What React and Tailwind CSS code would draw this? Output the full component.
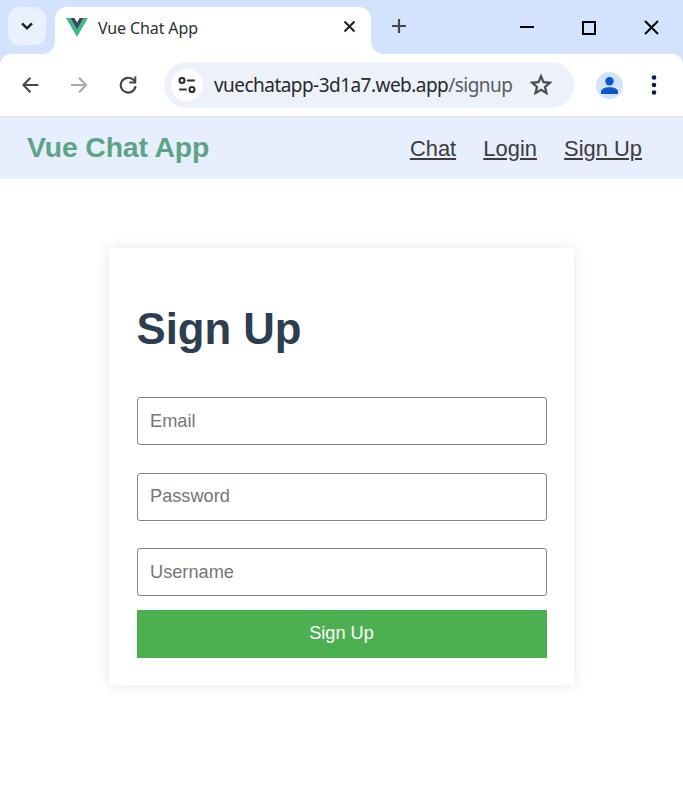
import React from 'react';

const VueLogo = () => (
    <svg width="22" height="19" viewBox="0 0 22 19" className="shrink-0">
        <path d="M0 0h4.4L11 11.4 17.6 0H22L11 19z" fill="#41b883" />
        <path d="M4.4 0h4L11 4.5 13.6 0h4L11 11.4z" fill="#35495e" />
    </svg>
);

// Small concave corner where the active tab meets the toolbar
const TabFoot = ({ flip }) => (
    <svg width="13" height="13" viewBox="0 0 13 13" className={`self-end shrink-0 ${flip ? '-scale-x-100' : ''}`}>
        <path d="M13 0v13H0C7.2 13 13 7.2 13 0z" fill="#fff" />
    </svg>
);

const TabStrip = () => (
    <div className="flex h-[54px] bg-[#d3e3fd]">
        <button className="mt-[7px] ml-2 flex h-[38px] w-[38px] shrink-0 items-center justify-center rounded-[12px] bg-[#e9f1fe]">
            <svg width="12" height="8" viewBox="0 0 12 8" fill="none" stroke="#1f1f1f" strokeWidth="2.4">
                <path d="M1 1.3l5 5 5-5" />
            </svg>
        </button>
        <div className="-ml-1 flex h-full">
            <TabFoot />
            <div className="mt-[7px] flex h-[47px] w-[316px] items-start rounded-t-[12px] bg-white pt-[11px] pr-[15px] pl-[11px]">
                <VueLogo />
                <span className="ml-[10px] flex-1 font-['Noto_Sans',sans-serif] text-[16px] leading-[20px] tracking-[-0.12px] text-[#303030]">
                    Vue Chat App
                </span>
                <svg width="13" height="13" viewBox="0 0 13 13" fill="none" stroke="#1f1f1f" strokeWidth="2" className="mt-[2px]">
                    <path d="M1.5 1.5l10 10M11.5 1.5l-10 10" />
                </svg>
            </div>
            <TabFoot flip />
        </div>
        <svg width="14" height="14" viewBox="0 0 14 14" stroke="#474747" strokeWidth="2.2" className="mt-[19px] ml-[8px] shrink-0">
            <path d="M7 0v14M0 7h14" />
        </svg>
        <div className="mt-[20px] mr-[24px] ml-auto flex h-[15px] items-center gap-[48px] text-black">
            <svg width="14" height="15" viewBox="0 0 14 15" stroke="currentColor" strokeWidth="2" className="-mr-px">
                <path d="M0 7h14" />
            </svg>
            <svg width="15" height="15" viewBox="0 0 15 15" fill="none" stroke="currentColor" strokeWidth="2">
                <path d="M2 2h12v12H2z" />
            </svg>
            <svg width="15" height="15" viewBox="0 0 15 15" fill="none" stroke="currentColor" strokeWidth="2">
                <path d="M1 1l13 13M14 1L1 14" />
            </svg>
        </div>
    </div>
);

const Toolbar = () => (
    <div className="bg-[#d3e3fd]">
        <div className="flex h-[64px] items-center rounded-t-[11px] border-b-2 border-[#e4e6e9] bg-white pl-[22px]">
            <svg width="17" height="16" viewBox="0 0 17 16" fill="none" stroke="#474747" strokeWidth="2.1">
                <path d="M16.3 8H1.8M8.4 .8L1.4 8l7 7.2" />
            </svg>
            <svg width="17" height="16" viewBox="0 0 17 16" fill="none" stroke="#aaaaaa" strokeWidth="2.1" className="ml-[32px]">
                <path d="M0 8h14.7M8.1 .8l7 7.2-7 7.2" />
            </svg>
            <svg width="18" height="18" viewBox="0 0 18 18" fill="none" stroke="#474747" strokeWidth="2.2" className="ml-[31px]">
                <path d="M16.5 10.2A7.4 7.4 0 1 1 14.3 3.8l2 2" />
                <path d="M17.3 .6v7H10.3V5.5h4.9V.6z" fill="#474747" stroke="none" />
            </svg>
            <div className="ml-[27px] flex h-[46px] w-[410px] items-center rounded-full bg-[#ecf1fa] pr-[22px] pl-[7px]">
                <div className="flex h-8 w-8 shrink-0 items-center justify-center rounded-full bg-white">
                    <svg width="18" height="16" viewBox="0 0 18 16" fill="none" stroke="#303030" strokeWidth="2.1">
                        <circle cx="4" cy="3.5" r="2.5" />
                        <path d="M9 3.5h7.8M1.2 12.5h7.5" />
                        <circle cx="14" cy="12.5" r="2.5" />
                    </svg>
                </div>
                <span className="ml-[11px] flex-1 font-['Noto_Sans',sans-serif] text-[19px] leading-[26px] tracking-[-0.54px] whitespace-nowrap text-[#28292c]">
                    vuechatapp-3d1a7.web.app<span className="text-[#5a5c60]">/signup</span>
                </span>
                <svg width="22" height="21" viewBox="0 0 20 19" fill="#474747" stroke="#474747" strokeWidth="0.4" className="mb-[2px] shrink-0">
                    <path d="M20 7.24l-7.19-.62L10 0 7.19 6.63 0 7.24l5.46 4.73L3.82 19 10 15.27 16.18 19l-1.63-7.03L20 7.24zM10 13.4l-3.76 2.27 1-4.28-3.32-2.88 4.38-.38L10 4.1l1.71 4.04 4.38.38-3.32 2.88 1 4.28L10 13.4z" />
                </svg>
            </div>
            <div className="ml-[22px] flex h-[27px] w-[27px] items-center justify-center rounded-full bg-[#d3e3fd]">
                <svg width="17" height="17" viewBox="0 0 17 17" fill="#0b57d0">
                    <circle cx="8.5" cy="4.3" r="4.2" />
                    <path d="M0 17v-2.5C0 11.6 4.8 10.2 8.5 10.2s8.5 1.4 8.5 4.3V17z" />
                </svg>
            </div>
            <svg width="6" height="20" viewBox="0 0 6 20" fill="#041e49" className="ml-[28px]">
                <circle cx="3" cy="2.5" r="2.3" />
                <circle cx="3" cy="10" r="2.3" />
                <circle cx="3" cy="17.5" r="2.3" />
            </svg>
        </div>
    </div>
);

const NavBar = () => (
    <header className="flex h-[61px] items-center justify-between bg-[#e7eefe] pr-[41px] pl-[27px]">
        <div className="mb-[3px] text-[28.4px] leading-[34px] font-bold tracking-[-0.15px] text-[#5ba585]">Vue Chat App</div>
        <nav className="flex gap-[27.2px] text-[21.9px] leading-[26px] text-[#3c3c3c]">
            <a href="#chat" className="underline">Chat</a>
            <a href="#login" className="underline">Login</a>
            <a href="#signup" className="underline">Sign Up</a>
        </nav>
    </header>
);

const Field = ({ type = 'text', placeholder }) => (
    <input
        type={type}
        placeholder={placeholder}
        className="block h-12 w-full rounded-[3px] border border-[#858585] bg-white px-[12.5px] text-[18.2px] placeholder:text-[#757575]"
    />
);

const SignUpForm = () => (
    <form className="mx-auto mt-[69px] h-[437px] w-[465px] bg-white px-[27.5px] pt-[54px] shadow-[0_0_14px_rgba(0,0,0,0.1)]">
        <h1 className="text-[43.7px] leading-[54px] font-bold text-[#2c3e50]">Sign Up</h1>
        <div className="mt-[41px] flex flex-col gap-[27.5px]">
            <Field type="email" placeholder="Email" />
            <Field type="password" placeholder="Password" />
            <Field placeholder="Username" />
        </div>
        <button type="button" className="mt-[14px] block h-12 w-full bg-[#4caf50] text-[18.2px] text-white">
            Sign Up
        </button>
    </form>
);

const App = () => (
    <div className="h-[800px] w-[683px] overflow-hidden bg-white font-['Liberation_Sans',Arial,sans-serif]">
        <TabStrip />
        <Toolbar />
        <NavBar />
        <SignUpForm />
    </div>
);

export default App;
